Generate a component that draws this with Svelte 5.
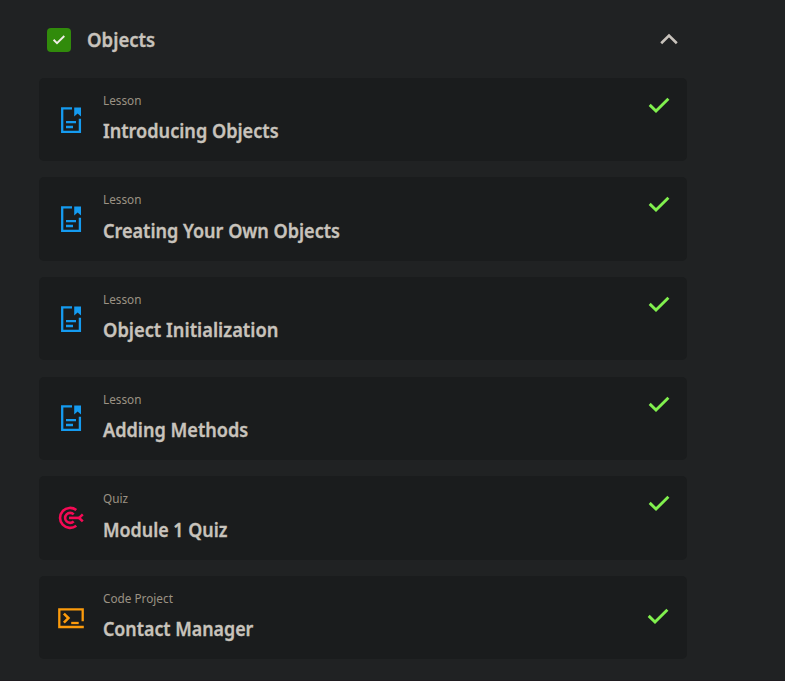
<script>
  const items = [
    { kind: 'Lesson', title: 'Introducing Objects', icon: 'lesson', width: 0.905 },
    { kind: 'Lesson', title: 'Creating Your Own Objects', icon: 'lesson', width: 0.902 },
    { kind: 'Lesson', title: 'Object Initialization', icon: 'lesson', width: 0.914 },
    { kind: 'Lesson', title: 'Adding Methods', icon: 'lesson', width: 0.905 },
    { kind: 'Quiz', title: 'Module 1 Quiz', icon: 'quiz', width: 0.893 },
    { kind: 'Code Project', title: 'Contact Manager', icon: 'project', width: 0.891 }
  ];
</script>

<main>
  <section>
    <header>
      <span class="box">
        <svg width="24" height="24" viewBox="0 0 24 24"><path d="M6.6 11.8 10 15.1 17.3 8" fill="none" stroke="#f1eee8" stroke-width="1.9" /></svg>
      </span>
      <h2>Objects</h2>
      <svg class="chevron" width="20" height="14" viewBox="0 0 20 14"><path d="M2.2 11.2 10 3.6 17.8 11.2" fill="none" stroke="#c8c3bc" stroke-width="2.6" /></svg>
    </header>
    <ul>
      {#each items as item}
        <li>
          <svg class="icon" width="32" height="32" viewBox="0 0 32 32">
            {#if item.icon === 'lesson'}
              <g fill="none" stroke="#159bf0" stroke-width="2.3">
                <path d="M17 4.4H7.2V27.8H24.9V14.7" />
                <path d="M11 18.1H21M11 23H18" />
              </g>
              <path d="M19.2 3.4H26V12.4L22.6 9.6 19.2 12.4Z" fill="#159bf0" />
            {:else if item.icon === 'quiz'}
              <g fill="none" stroke="#f50a55" stroke-width="2.6">
                <path d="M21.3 8.1A10 10 0 1 0 21.3 23.7" />
                <path d="M18.7 12.4A5 5 0 1 0 18.7 19.4" />
                <path d="M14 15.9H24.4" />
                <path d="M27.8 12.4 24.1 15.9 27.8 19.4" />
              </g>
            {:else}
              <g fill="none" stroke="#fc9b0c" stroke-width="2.3">
                <path d="M27.7 19.3V7.4H4.3V25H28.8" />
                <path d="M8.9 11.6 13.4 16.1 8.9 20.6" stroke-width="2.6" />
                <path d="M16.2 21H23.7" />
              </g>
            {/if}
          </svg>
          <div class="text">
            <span class="kind">{item.kind}</span>
            <h3 style:transform="scaleX({item.width})">{item.title}</h3>
          </div>
          <svg class="check" class:centered={item.icon === 'project'} width="24" height="20" viewBox="0 0 24 20"><path d="M2.7 9.9 9 16 21.4 3.8" fill="none" stroke="#81f04e" stroke-width="2.9" /></svg>
        </li>
      {/each}
    </ul>
  </section>
</main>

<style>
  :global(body) { background: #202223; }
  main {
    box-sizing: border-box;
    height: 681px;
    padding-left: 39px;
    overflow: hidden;
    border-bottom: 1px solid #1f1c20;
    font-family: "Noto Sans", "Open Sans", sans-serif;
    color: #c8c3bc;
  }
  section { width: 648px; }
  header { display: flex; align-items: center; height: 77.8px; padding: 2.2px 8px 0; box-sizing: border-box; }
  .box { width: 24px; height: 24px; border-radius: 4px; background: #318b0b; margin-right: 16px; }
  .box svg { display: block; }
  h2, h3 {
    margin: 0;
    font-size: 20px;
    line-height: 28px;
    font-weight: 600;
    white-space: nowrap;
    transform-origin: left;
    -webkit-text-stroke: 0.35px currentColor;
  }
  h2 { transform: scaleX(0.925); }
  .chevron { margin-left: auto; margin-bottom: 2px; }
  ul { list-style: none; margin: 0; padding: 0; display: flex; flex-direction: column; gap: 16.1px; }
  li { display: flex; align-items: flex-start; box-sizing: border-box; height: 83.5px; padding: 0 16px; border-radius: 5px; background: #1a1c1d; }
  .icon { margin-top: 25.8px; }
  .text { margin: 13px auto 0 16px; }
  .kind { display: block; font-size: 12px; line-height: 20px; height: 26.4px; color: #9b9284; transform: scaleX(0.98); transform-origin: left; }
  .check { margin-top: 17.1px; margin-right: 0.5px; }
  .check.centered { margin-top: 30px; margin-right: 1.5px; }
</style>
